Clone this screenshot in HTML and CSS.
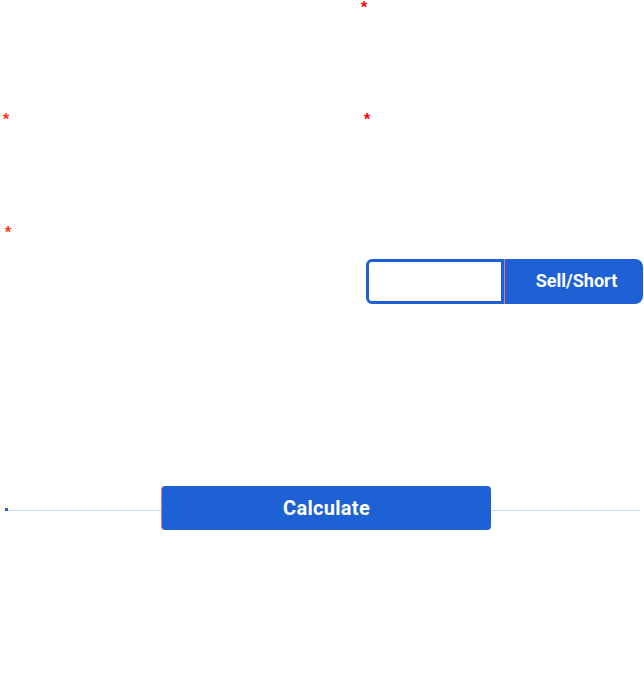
FILE: index.html
```html
<!DOCTYPE html>
<html lang="en">
<head>
<meta charset="utf-8">
<title>Calculator</title>
<link rel="stylesheet" href="styles.css">
</head>
<body>
<form class="calc-form">
  <div class="grid">
    <div class="field row1"></div>
    <div class="field row1"><span class="req req-red r1">*</span></div>
    <div class="field row2"><span class="req req-orange l2">*</span></div>
    <div class="field row2"><span class="req req-red r2">*</span></div>
    <div class="field row3"><span class="req req-orange l3">*</span></div>
    <div class="field row3">
      <span class="label-empty"></span>
      <div class="toggle">
        <button type="button" class="toggle-btn toggle-off"></button>
        <button type="button" class="toggle-btn toggle-on">Sell/Short</button>
      </div>
    </div>
  </div>
  <div class="calc-row">
    <span class="dot"></span>
    <span class="rule"></span>
    <button type="button" class="calc-btn">Calculate</button>
    <span class="rule rule-right"></span>
  </div>
</form>
</body>
</html>
```
FILE: styles.css
```css
html, body {
  margin: 0;
  padding: 0;
  background: #ffffff;
}
body {
  font-family: Roboto, "Liberation Sans", Arial, sans-serif;
  width: 644px;
  height: 695px;
  overflow: hidden;
}
.calc-form {
  display: flex;
  flex-direction: column;
}
.grid {
  display: grid;
  grid-template-columns: 361px 283px;
}
.field {
  display: flex;
  flex-direction: column;
  align-items: flex-start;
}
.row1 { height: 112px; }
.row2 { height: 113px; }
.row3 { height: 79px; }
.req {
  display: block;
  font-family: "Liberation Sans", Arial, sans-serif;
  font-weight: bold;
  font-size: 16px;
  line-height: 16px;
  height: 16px;
}
.req-red { color: #ff0000; }
.req-orange { color: #ff3a12; }
.r1 { margin-left: 0; }
.r2 { margin-left: 3px; }
.l2 { margin-left: 3px; }
.l3 { margin-left: 5px; }
.label-empty {
  display: block;
  height: 16px;
}
.toggle {
  display: flex;
  margin-top: 18px;
  margin-left: 5px;
  width: 277px;
  height: 45px;
}
.toggle-btn {
  flex: 0 0 auto;
  height: 45px;
  margin: 0;
  padding: 0;
  font-family: Roboto, "Liberation Sans", Arial, sans-serif;
  font-weight: bold;
  font-size: 18px;
  color: #ffffff;
  cursor: pointer;
}
.toggle-off {
  width: 138px;
  background: #ffffff;
  border: 3px solid #1d61d4;
  border-radius: 6px 0 0 6px;
}
.toggle-on {
  width: 139px;
  background: #1d61d4;
  border: none;
  border-left: 1px solid #f2737d;
  border-radius: 0 8px 8px 0;
  padding: 0 0 2px 5px;
}
.calc-row {
  display: flex;
  align-items: center;
  margin-top: 182px;
  padding-left: 5px;
  width: 635px;
}
.dot {
  flex: 0 0 auto;
  width: 3px;
  height: 3px;
  background: #2f5fcc;
  margin-top: 2px;
}
.rule {
  flex: 1 1 auto;
  height: 1px;
  background: #c8dcfa;
  margin-top: 4px;
}
.rule-right {
  flex: 0 0 149px;
}
.calc-btn {
  flex: 0 0 330px;
  height: 44px;
  margin: 0;
  padding: 0 0 1px 0;
  background: #1d61d4;
  border: none;
  border-left: 1px solid #f2737d;
  border-radius: 4px;
  color: #ffffff;
  font-family: Roboto, "Liberation Sans", Arial, sans-serif;
  font-weight: bold;
  font-size: 20px;
  letter-spacing: 0.3px;
  cursor: pointer;
}
```
